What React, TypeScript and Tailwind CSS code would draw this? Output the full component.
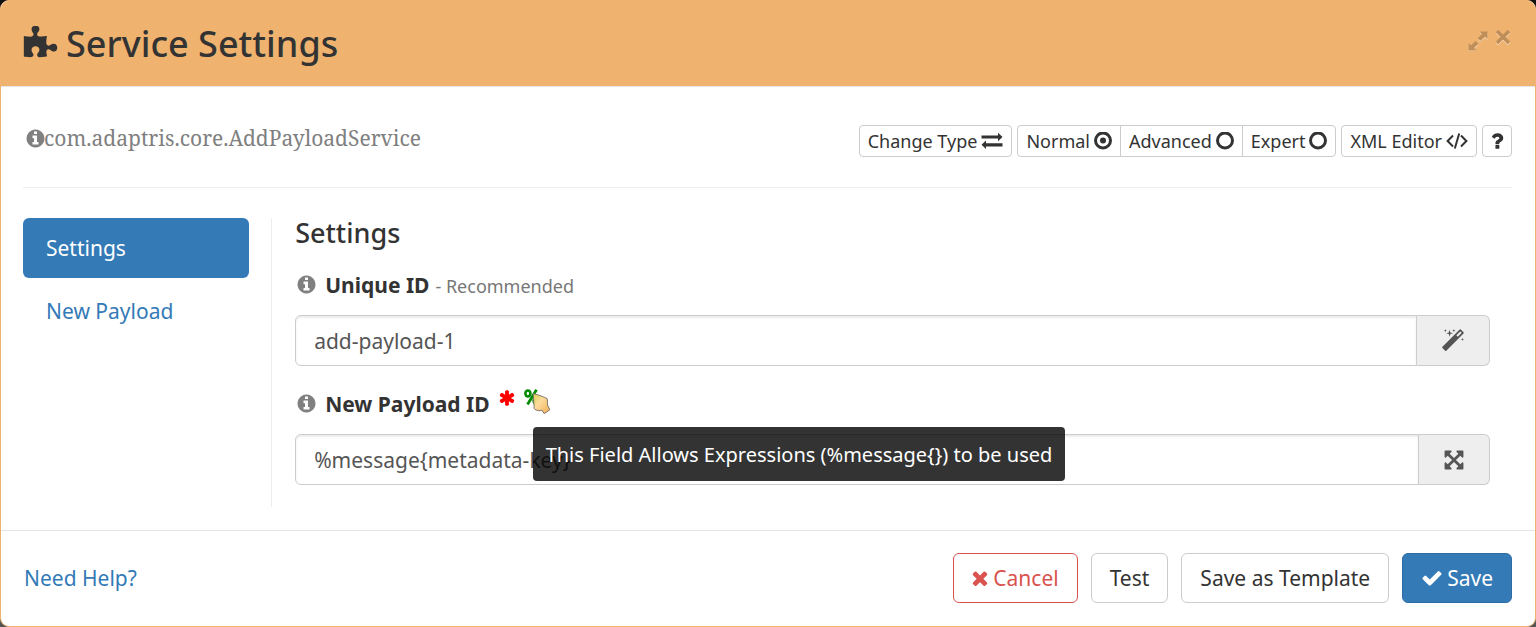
import type { ReactNode } from "react";

function Glyph({ d, className }: { d: string; className: string }) {
  return (
    <svg viewBox="0 0 1792 1792" fill="currentColor" aria-hidden="true" className={`shrink-0 ${className}`}>
      <path d={d} />
    </svg>
  );
}

const PUZZLE =
  "M1755 1083q0 81-44.5 135t-123.5 54q-41 0-77.5-17.5t-59-38-56.5-38-71-17.5q-110 0-110 124 0 39 16 115t15 115v5q-22 0-33 1-34 3-97.5 11.5t-115.5 13.5-98 5q-61 0-103-26.5t-42-83.5q0-37 17.5-71t38-56.5 38-59 17.5-77.5q0-79-54-123.5t-135-44.5q-84 0-143 45.5t-59 127.5q0 43 15 83t33.5 64.5 33.5 53 15 50.5q0 45-46 89-37 35-117 35-95 0-245-24-9-2-27.5-4t-27.5-4l-13-2q-1 0-3-1-2 0-2-1v-1024q2 1 17.5 3.5t34 5 21.5 3.5q150 24 245 24 80 0 117-35 46-44 46-89 0-22-15-50.5t-33.5-53-33.5-64.5-15-83q0-82 59-127.5t144-45.5q80 0 134 44.5t54 123.5q0 41-17.5 77.5t-38 59-38 56.5-17.5 71q0 57 42 83.5t103 26.5q64 0 180-15t163-17v2q-1 2-3.5 17.5t-5 34-3.5 21.5q-24 150-24 245 0 80 35 117 44 46 89 46 22 0 50.5-15t53-33.5 64.5-33.5 83-15q82 0 127.5 59t45.5 143z";
const INFO =
  "M1152 1376v-160q0-14-9-23t-23-9h-96v-512q0-14-9-23t-23-9h-320q-14 0-23 9t-9 23v160q0 14 9 23t23 9h96v320h-96q-14 0-23 9t-9 23v160q0 14 9 23t23 9h448q14 0 23-9t9-23zm-128-896v-160q0-14-9-23t-23-9h-192q-14 0-23 9t-9 23v160q0 14 9 23t23 9h192q14 0 23-9t9-23zm640 416q0 209-103 385.5t-279.5 279.5-385.5 103-385.5-103-279.5-279.5-103-385.5 103-385.5 279.5-279.5 385.5-103 385.5 103 279.5 279.5 103 385.5z";
const MAGIC =
  "M1254 581l293-293-107-107-293 293zm447-293q0 27-18 45l-1286 1286q-18 18-45 18t-45-18l-198-198q-18-18-18-45t18-45l1286-1286q18-18 45-18t45 18l198 198q18 18 18 45zm-1351-190l98 30-98 30-30 98-30-98-98-30 98-30 30-98zm350 162l196 60-196 60-60 196-60-196-196-60 196-60 60-196zm930 478l98 30-98 30-30 98-30-98-98-30 98-30 30-98zm-640-640l98 30-98 30-30 98-30-98-98-30 98-30 30-98z";
const ARROWS =
  "M1411 541l-355 355 355 355 144-144q29-31 70-14 39 17 39 59v448q0 26-19 45t-45 19h-448q-42 0-59-40-17-39 14-69l144-144-355-355-355 355 144 144q31 30 14 69-17 40-59 40h-448q-26 0-45-19t-19-45v-448q0-42 40-59 39-17 69 14l144 144 355-355-355-355-144 144q-19 19-45 19-12 0-24-5-40-17-40-59v-448q0-26 19-45t45-19h448q42 0 59 40 17 39-14 69l-144 144 355 355 355-355-144-144q-31-30-14-69 17-40 59-40h448q26 0 45 19t19 45v448q0 42-39 59-13 5-25 5-26 0-45-19z";
const ASTERISK =
  "M1546 1050l-266-154 266-154q46-26 59.5-77.5t-12.5-97.5l-64-110q-26-46-77.5-59.5t-97.5 12.5l-266 153v-307q0-52-38-90t-90-38h-128q-52 0-90 38t-38 90v307l-266-153q-46-26-97.5-12.5t-77.5 59.5l-64 110q-26 46-12.5 97.5t59.5 77.500l266 154-266 154q-46 26-59.5 77.5t12.5 97.5l64 110q26 46 77.5 59.5t97.5-12.5l266-153v307q0 52 38 90t90 38h128q52 0 90-38t38-90v-307l266 153q46 26 97.5 12.5t77.5-59.5l64-110q26-46 12.5-97.5t-59.5-77.5z";
const CHECK =
  "M1671 566q0 40-28 68l-724 724-136 136q-28 28-68 28t-68-28l-136-136-362-362q-28-28-28-68t28-68l136-136q28-28 68-28t68 28l294 295 656-657q28-28 68-28t68 28l136 136q28 28 28 68z";
const TIMES =
  "M1490 1322q0 40-28 68l-136 136q-28 28-68 28t-68-28l-294-294-294 294q-28 28-68 28t-68-28l-136-136q-28-28-28-68t28-68l294-294-294-294q-28-28-28-68t28-68l136-136q28-28 68-28t68 28l294 294 294-294q28-28 68-28t68 28l136 136q28 28 28 68t-28 68l-294 294 294 294q28 28 28 68z";
const QUESTION =
  "M1088 1256v240q0 16-12 28t-28 12h-240q-16 0-28-12t-12-28v-240q0-16 12-28t28-12h240q16 0 28 12t12 28zm316-600q0 54-15.5 101t-35 76.5-55 59.5-57.5 43.5-61 35.5q-41 23-68.5 65t-27.5 67q0 17-12 32.5t-28 15.5h-240q-15 0-25.5-18.5t-10.5-37.5v-45q0-83 65-156.5t143-108.5q59-27 84-56t25-76q0-42-46.5-74t-107.5-32q-65 0-108 29-35 25-107 115-13 16-31 16-12 0-25-8l-164-125q-13-10-15.5-25t5.5-28q160-266 464-266 80 0 161 31t146 83 106 127.5 41 158.5z";

function Radio({ on }: { on?: boolean }) {
  return (
    <svg viewBox="0 0 18 18" className="size-[18px] shrink-0" aria-hidden="true">
      <circle cx="9" cy="8.5" r="7.5" fill="none" stroke="currentColor" strokeWidth="3" />
      {on && <circle cx="9" cy="8.5" r="3" fill="currentColor" />}
    </svg>
  );
}

function Exchange() {
  return (
    <svg viewBox="0 0 22 16" className="h-4 w-[22px] shrink-0" fill="currentColor" aria-hidden="true">
      <path d="M.5 2.500h16.500V-.3l4.500 4.300L17 8.300V5.600H.5zM21.500 10.300H5V7.600L.5 11.800 5 16v-2.600h16.500z" />
    </svg>
  );
}

function Code() {
  return (
    <svg viewBox="0 0 22 16" className="h-4 w-[22px] shrink-0" fill="none" stroke="currentColor" strokeWidth="2" aria-hidden="true">
      <path d="M7 2.500 1.600 8 7 13.500M15 2.500 20.400 8 15 13.500M13.200.5 8.800 15.500" />
    </svg>
  );
}

function SmallButton({ children, className = "rounded-[4px]" }: { children: ReactNode; className?: string }) {
  return (
    <button
      type="button"
      className={`flex h-8 items-center gap-1 border border-[#ccc] bg-white px-2 text-lg leading-none text-[#333] ${className}`}
    >
      {children}
    </button>
  );
}

function FooterButton({ children, className }: { children: ReactNode; className: string }) {
  return (
    <button type="button" className={`flex h-[50px] items-center rounded-[6px] border px-[18px] text-[21px] leading-[30px] ${className}`}>
      {children}
    </button>
  );
}

function Field({
  id,
  label,
  value,
  extra,
  action,
  actionLabel,
}: {
  id: string;
  label: string;
  value: string;
  extra: ReactNode;
  action: ReactNode;
  actionLabel: string;
}) {
  return (
    <div className="mb-[23px] last:mb-[22px]">
      <div className="flex h-[45px] items-start pl-px">
        <Glyph d={INFO} className="mt-1 size-[21px] text-[#808080]" />
        <label htmlFor={id} className="ml-2 text-[21px] leading-[30px] font-bold">
          {label}
        </label>
        {extra}
      </div>
      <div className="flex h-[51px]">
        <input
          id={id}
          type="text"
          defaultValue={value}
          className="min-w-0 grow rounded-l-[6px] border border-[#ccc] bg-white px-[18px] text-[21px] text-[#555] shadow-[inset_0_2px_2px_rgba(0,0,0,0.075)] outline-none"
        />
        <button
          type="button"
          aria-label={actionLabel}
          className="flex items-center rounded-r-[6px] border border-l-0 border-[#ccc] bg-[#eee] px-6 text-[#555]"
        >
          {action}
        </button>
      </div>
    </div>
  );
}

function ExpressionHint() {
  return (
    <span className="relative ml-2 block size-4">
      <svg viewBox="0 0 16 16" className="size-4 text-[#008a00]" fill="none" stroke="currentColor" aria-hidden="true">
        <ellipse cx="3.900" cy="4.500" rx="2.500" ry="3" strokeWidth="2.600" />
        <ellipse cx="12.100" cy="11.700" rx="2.500" ry="3" strokeWidth="2.600" />
        <path d="M12.500.8 3.500 15.400" strokeWidth="2.800" />
      </svg>
      <svg viewBox="0 0 20 24" className="absolute top-1 left-2 h-6 w-5" aria-hidden="true">
        <defs>
          <linearGradient id="hand" x1="0" y1="0" x2="1" y2="1">
            <stop offset="0" stopColor="#d8cf50" />
            <stop offset=".4" stopColor="#fbdc9c" />
            <stop offset="1" stopColor="#f2ab52" />
          </linearGradient>
        </defs>
        <path
          d="M1.200.8C4 1 12.500 4 15 5.600c1 1.600 0 5 .6 6.600l2.200 4.600-5.600 3.800-2.200-3.400c-1.500 1-5.500.3-7-.8-1-.8-1.200-2.200-.8-3C1.600 9 1.600 4.500 1.200.8z"
          fill="url(#hand)"
          stroke="#7d7468"
          strokeWidth="1"
          strokeLinejoin="round"
        />
      </svg>
      <span
        role="tooltip"
        className="absolute top-[38px] left-[9px] z-10 rounded-[4px] bg-black/80 px-[13px] pt-[13px] pb-[11px] text-xl leading-[30px] whitespace-nowrap text-white"
      >
        This Field Allows Expressions (%message{"{}"}) to be used
      </span>
    </span>
  );
}

export default function App() {
  return (
    <div className="min-h-screen bg-linear-to-b from-[#111] to-[#555] font-['Noto_Sans',sans-serif] text-[21px] leading-[30px] text-[#333]">
      <section aria-labelledby="title" className="overflow-hidden rounded-[9px] border border-[#f0b36f] bg-white">
        <header className="flex items-start justify-between border-b border-[#e5e5e5] bg-[#f0b36f] px-[22px] py-[22px]">
          <h1 id="title" className="-ml-px flex items-center gap-2 text-4xl leading-[41px] font-medium">
            <Glyph d={PUZZLE} className="size-9" />
            Service Settings
          </h1>
          <div className="flex items-start gap-[6px] pt-[5px] pr-px text-[#c08f59]">
            <button type="button" aria-label="Maximise" className="pt-[3px]">
              <svg viewBox="0 0 20 20" className="size-5" fill="currentColor" aria-hidden="true">
                <path
                  d="M19.500.5v7.500l-2.500-2.200-4.600 4.200-2.800-2.800 4.400-4.200L11.500.5zM.5 19.500V12l2.500 2.200 4.600-4.200 2.800 2.800-4.400 4.200 2.500 2.500z"
                  transform="translate(0 1)"
                  fill="#f7d9b6"
                />
                <path d="M19.500.5v7.500l-2.500-2.200-4.600 4.200-2.800-2.800 4.400-4.200L11.500.5zM.5 19.500V12l2.500 2.200 4.600-4.200 2.800 2.800-4.400 4.200 2.500 2.500z" />
              </svg>
            </button>
            <button type="button" aria-label="Close">
              <svg viewBox="0 0 18 18" className="size-[18px]" fill="none" strokeWidth="3.600" aria-hidden="true">
                <path d="m3 4 12 12M15 4 3 16" stroke="#f7d9b6" />
                <path d="m3 3 12 12M15 3 3 15" stroke="currentColor" />
              </svg>
            </button>
          </div>
        </header>

        <main className="pt-[38px] pr-[23px] pl-[22px]">
          <div className="flex h-8 items-center justify-between">
            <div className="flex items-center pb-[6px] pl-[2px] font-['Noto_Serif','Liberation_Serif',serif] text-[#808080]">
              <Glyph d={INFO} className="-mr-[2px] size-[21px]" />
              com.adaptris.core.AddPayloadService
            </div>
            <div className="flex gap-[5px]">
              <SmallButton>
                Change Type <Exchange />
              </SmallButton>
              <div className="flex">
                <SmallButton className="rounded-l-[4px]">
                  Normal <Radio on />
                </SmallButton>
                <SmallButton className="-ml-px">
                  Advanced <Radio />
                </SmallButton>
                <SmallButton className="-ml-px rounded-r-[4px]">
                  Expert <Radio />
                </SmallButton>
              </div>
              <SmallButton>
                XML Editor <Code />
              </SmallButton>
              <button
                type="button"
                aria-label="Help"
                className="flex h-8 w-[30px] items-center justify-center rounded-[4px] border border-[#ccc] bg-white"
              >
                <Glyph d={QUESTION} className="size-[22px]" />
              </button>
            </div>
          </div>

          <hr className="my-[30px] border-[#eee]" />

          <div className="flex pb-[23px]">
            <nav className="w-1/6 pr-[22px]">
              <a href="#settings" className="block rounded-[6px] bg-[#337ab7] px-[23px] py-[15px] text-white">
                Settings
              </a>
              <a href="#new-payload" className="mt-[3px] block rounded-[6px] px-[23px] py-[15px] text-[#337ab7]">
                New Payload
              </a>
            </nav>
            <div className="min-w-0 grow border-l border-[#eee] pr-[22px] pl-[23px]">
              <h2 className="mb-[22px] text-[27px] leading-[30px] font-medium">Settings</h2>
              <Field
                id="unique-id"
                label="Unique ID"
                value="add-payload-1"
                extra={<span className="ml-[6px] text-lg leading-[32px] text-[#777]">- Recommended</span>}
                action={<Glyph d={MAGIC} className="size-6" />}
                actionLabel="Generate ID"
              />
              <Field
                id="payload-id"
                label="New Payload ID"
                value="%message{metadata-key}"
                extra={
                  <>
                    <Glyph d={ASTERISK} className="ml-2 size-[18px] text-[#f00]" />
                    <ExpressionHint />
                  </>
                }
                action={<Glyph d={ARROWS} className="size-[22px]" />}
                actionLabel="Expand"
              />
            </div>
          </div>
        </main>

        <footer className="flex items-center justify-between border-t border-[#e5e5e5] px-[23px] pt-[22px] pb-[23px]">
          <a href="#help" className="text-[#337ab7]">
            Need Help?
          </a>
          <div className="flex gap-[13px]">
            <FooterButton className="gap-1 border-[#d9534f] bg-white text-[#d9534f]">
              <Glyph d={TIMES} className="-mr-[2px] -ml-[3px] size-[22px]" />
              Cancel
            </FooterButton>
            <FooterButton className="border-[#ccc] bg-white">Test</FooterButton>
            <FooterButton className="border-[#ccc] bg-white">Save as Template</FooterButton>
            <FooterButton className="gap-1 border-[#2e6da4] bg-[#337ab7] text-white">
              <Glyph d={CHECK} className="size-[22px]" />
              Save
            </FooterButton>
          </div>
        </footer>
      </section>
    </div>
  );
}
